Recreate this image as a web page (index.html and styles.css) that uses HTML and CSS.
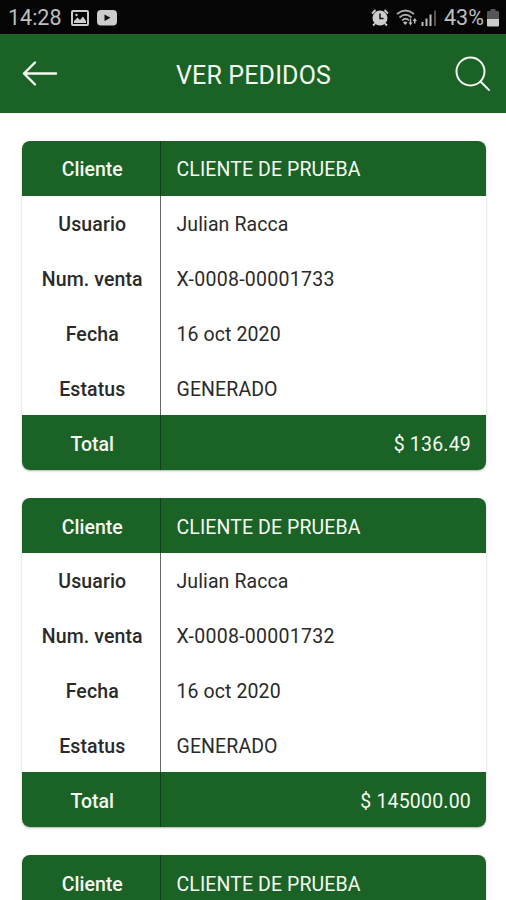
FILE: index.html
```html
<!DOCTYPE html>
<html lang="es">
<head>
<meta charset="utf-8">
<title>Ver pedidos</title>
<link rel="stylesheet" href="styles.css">
</head>
<body>
<div class="status">
  <span class="clock">14:28</span>
  <svg class="picture" width="18" height="16" viewBox="0 0 18 16"><rect x="1" y="1" width="16" height="14" rx="1" fill="none" stroke="#ccc" stroke-width="2"/><path d="M3 13V11L6.500 7.500L9 10L12 6.500L15 11V13Z" fill="#ccc"/><circle cx="5.500" cy="5" r="1.200" fill="#ccc"/></svg>
  <svg class="video" width="20" height="16" viewBox="0 0 20 16"><rect width="20" height="15.500" rx="4" fill="#ccc"/><path d="M7.500 4.500L13.500 7.800L7.500 11Z" fill="#111"/></svg>
  <svg class="alarm" width="18" height="18" viewBox="0 0 18 18"><circle cx="9" cy="9" r="7.500" fill="#ccc"/><path d="M1 4.500L4.500 1M17 4.500L13.500 1M4 14.500L2 16.500M14 14.500L16 16.500" stroke="#ccc" stroke-width="1.800"/><path d="M9 4.500V9.500H12.500" fill="none" stroke="#111" stroke-width="1.500"/></svg>
  <svg class="wifi" width="22" height="18" viewBox="0 0 22 18"><g fill="none" stroke="#aaa" stroke-width="1.700"><path d="M1 5Q9.500-2 18 5"/><path d="M3.500 8.500Q9.500 3 15.500 8.500"/><path d="M6 11.500Q9.500 8 13 11.500"/></g><path d="M7 13.500Q9 11.500 11.500 13.500L9.200 16Z" fill="#bbb"/><path d="M12.500 13.500L14.500 16.500L16.500 13.500H15.200V9.500H13.800V13.500ZM16.500 12L18.800 9L21 12H19.500V14.500H18V12Z" fill="#bbb"/></svg>
  <svg class="signal" width="16" height="18" viewBox="0 0 16 18"><path d="M1.500 17V13M5.500 17V9.500M9.500 17V5.500" stroke="#bbb" stroke-width="2"/><path d="M14 17V1.500" stroke="#555" stroke-width="2"/></svg>
  <span class="percent">43%</span>
  <svg class="battery" width="12" height="18" viewBox="0 0 12 18"><path d="M3.500 0H8.500V2H11Q12 2 12 3V10H0V3Q0 2 1 2H3.500Z" fill="#555"/><path d="M0 10H12V16Q12 17.500 11 17.500H1Q0 17.500 0 16Z" fill="#ccc"/></svg>
</div>
<header class="bar">
  <svg width="36" height="36" viewBox="0 0 36 36"><path d="M34 17.500H2M13 6.500L2 17.500L13 28.500" class="stroke"/></svg>
  <h1>VER PEDIDOS</h1>
  <svg width="36" height="36" viewBox="0 0 36 36"><circle cx="15.500" cy="15.500" r="14" class="thin"/><path d="M25.500 25.500L34 34" class="thin"/></svg>
</header>
<main>
  <dl class="card">
    <div class="row green"><dt>Cliente</dt><dd>CLIENTE DE PRUEBA</dd></div>
    <div class="row"><dt>Usuario</dt><dd>Julian Racca</dd></div>
    <div class="row"><dt>Num. venta</dt><dd class="number">X-0008-00001733</dd></div>
    <div class="row"><dt>Fecha</dt><dd>16 oct 2020</dd></div>
    <div class="row"><dt>Estatus</dt><dd>GENERADO</dd></div>
    <div class="row green total"><dt>Total</dt><dd>$ 136.49</dd></div>
  </dl>
  <dl class="card">
    <div class="row green"><dt>Cliente</dt><dd>CLIENTE DE PRUEBA</dd></div>
    <div class="row"><dt>Usuario</dt><dd>Julian Racca</dd></div>
    <div class="row"><dt>Num. venta</dt><dd class="number">X-0008-00001732</dd></div>
    <div class="row"><dt>Fecha</dt><dd>16 oct 2020</dd></div>
    <div class="row"><dt>Estatus</dt><dd>GENERADO</dd></div>
    <div class="row green total"><dt>Total</dt><dd>$ 145000.00</dd></div>
  </dl>
  <dl class="card">
    <div class="row green"><dt>Cliente</dt><dd>CLIENTE DE PRUEBA</dd></div>
  </dl>
</main>
</body>
</html>
```
FILE: styles.css
```css
* { box-sizing: border-box; }
body { margin: 0; height: 900px; overflow: hidden; background: #fff; font-family: Roboto, sans-serif; display: flex; flex-direction: column; }
.status { height: 34px; flex: none; background: #050505; color: #bebebe; display: flex; align-items: center; padding: 1px 7px 0 8px; font-size: 21.5px; }
.status svg { flex: none; }
.clock { width: 63px; }
.video { margin-left: 8px; }
.alarm { margin-left: auto; }
.wifi { margin-left: 7px; }
.signal { margin-left: 3px; }
.percent { margin-left: 7px; width: 43px; }
.bar { height: 79px; flex: none; background: #1b6227; color: #f4faf0; display: flex; align-items: center; justify-content: space-between; padding: 0 15px 0 22px; }
.bar h1 { margin: 3px 6px 0 0; font-size: 25px; font-weight: 400; letter-spacing: .15px; }
.stroke, .thin { fill: none; stroke: #f4faf0; stroke-width: 2.4; stroke-linecap: round; stroke-linejoin: round; }
.thin { stroke-width: 2; }
main { padding: 28px 20px 0 22px; display: flex; flex-direction: column; gap: 28.2px; }
.card { margin: 0; border-radius: 8px; overflow: hidden; flex: none; box-shadow: 0 1px 2px rgba(0,0,0,.3); font-size: 19.5px; color: #2a2a2a; }
.row { display: flex; height: 54.83px; }
.row dt { width: 138.5px; border-right: 1.5px solid #666; display: flex; align-items: center; justify-content: center; font-weight: 500; letter-spacing: .1px; padding: 3px 0 0 3px; }
.row dd { margin: 0; flex: 1; display: flex; align-items: center; padding: 3px 15px 0 16px; letter-spacing: .1px; }
.row .number { letter-spacing: .27px; }
.green { background: #1b6227; color: #f4faf0; }
.green dt { border-color: #124019; letter-spacing: 0; }
.total dd { justify-content: flex-end; letter-spacing: .2px; }
```
